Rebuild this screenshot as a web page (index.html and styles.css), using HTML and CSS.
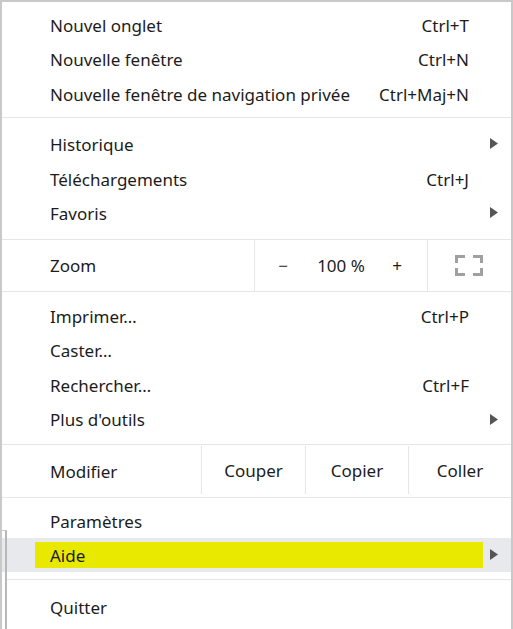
FILE: index.html
```html
<!DOCTYPE html>
<html lang="fr">
<head>
<meta charset="utf-8">
<title>Menu</title>
<link rel="stylesheet" href="styles.css">
</head>
<body>
<div class="menu">
  <div class="group g1 low">
    <div class="item"><span class="label">Nouvel onglet</span><span class="shortcut">Ctrl+T</span><span class="sub"></span></div>
    <div class="item"><span class="label">Nouvelle fenêtre</span><span class="shortcut">Ctrl+N</span><span class="sub"></span></div>
    <div class="item"><span class="label">Nouvelle fenêtre de navigation privée</span><span class="shortcut">Ctrl+Maj+N</span><span class="sub"></span></div>
  </div>
  <div class="sep"></div>
  <div class="group g2 low">
    <div class="item"><span class="label">Historique</span><span class="sub"><svg class="arrow" width="8" height="11" viewBox="0 0 8 11"><polygon points="0,0 8,5.5 0,11"/></svg></span></div>
    <div class="item"><span class="label">Téléchargements</span><span class="shortcut">Ctrl+J</span><span class="sub"></span></div>
    <div class="item"><span class="label">Favoris</span><span class="sub"><svg class="arrow" width="8" height="11" viewBox="0 0 8 11"><polygon points="0,0 8,5.5 0,11"/></svg></span></div>
  </div>
  <div class="sep"></div>
  <div class="zoom-row">
    <div class="zr-label">Zoom</div>
    <div class="zr-ctrl">
      <span class="zbtn zminus">−</span>
      <span class="zval">100 %</span>
      <span class="zbtn zplus">+</span>
    </div>
    <div class="zr-full">
      <svg width="28" height="21" viewBox="0 0 28 21" class="fs-icon">
        <path d="M1.5 8 V1.5 H10"/>
        <path d="M18 1.5 H26.5 V8"/>
        <path d="M1.5 13 V19.5 H10"/>
        <path d="M18 19.5 H26.5 V13"/>
      </svg>
    </div>
  </div>
  <div class="sep"></div>
  <div class="group g4">
    <div class="item"><span class="label">Imprimer…</span><span class="shortcut">Ctrl+P</span><span class="sub"></span></div>
    <div class="item"><span class="label">Caster…</span><span class="sub"></span></div>
    <div class="item"><span class="label">Rechercher…</span><span class="shortcut">Ctrl+F</span><span class="sub"></span></div>
    <div class="item"><span class="label">Plus d'outils</span><span class="sub"><svg class="arrow" width="8" height="11" viewBox="0 0 8 11"><polygon points="0,0 8,5.5 0,11"/></svg></span></div>
  </div>
  <div class="sep"></div>
  <div class="edit-row">
    <div class="er-label">Modifier</div>
    <div class="er-btn">Couper</div>
    <div class="er-btn">Copier</div>
    <div class="er-btn">Coller</div>
  </div>
  <div class="sep"></div>
  <div class="group g5 low">
    <div class="item"><span class="label">Paramètres</span><span class="sub"></span></div>
    <div class="item hover"><span class="label mark">Aide</span><span class="sub narrow"><svg class="arrow" width="8" height="11" viewBox="0 0 8 11"><polygon points="0,0 8,5.5 0,11"/></svg></span></div>
  </div>
  <div class="sep"></div>
  <div class="group g6 low">
    <div class="item"><span class="label">Quitter</span><span class="sub"></span></div>
  </div>
  <div class="edge"></div>
</div>
</body>
</html>
```

FILE: styles.css
```css
html, body {
  margin: 0;
  padding: 0;
  background: #ffffff;
}

body {
  font-family: "Noto Sans", "Open Sans", sans-serif;
  font-size: 17px;
  color: #1c1c1c;
}

.menu {
  position: relative;
  box-sizing: border-box;
  width: 513px;
  height: 629px;
  border-top: 2px solid #c9c9c9;
  border-left: 2px solid #c9c9c9;
  border-right: 2px solid #c9c9c9;
  background: #ffffff;
  overflow: hidden;
}

.group {
  display: flex;
  flex-direction: column;
}

.g1 { padding: 5px 0 6.5px; }
.g2 { padding: 8.5px 0 9px; }
.g4 { padding: 7px 0 7px; }
.g5 { padding: 5px 0 7px; }
.g6 { padding: 9.5px 0 0; }

.item {
  display: flex;
  align-items: center;
  box-sizing: border-box;
  height: 34.5px;
  padding-left: 48px;
  padding-right: 13px;
}

.low .item {
  padding-top: 2px;
}

.item .label {
  flex: 1;
  white-space: nowrap;
}

.item .shortcut {
  white-space: nowrap;
}

.item .sub {
  width: 29px;
  flex-shrink: 0;
  display: flex;
  justify-content: flex-end;
  align-items: center;
}

.low .item .sub {
  margin-top: -2px;
}

.item .sub.narrow {
  width: 15px;
}

.arrow {
  display: block;
  fill: #555555;
}

.item.hover {
  background: #e8e9ec;
}

.item .label.mark {
  flex: none;
  width: 433px;
  height: 26px;
  line-height: 28px;
  margin-left: -15px;
  padding-left: 15px;
  margin-top: -1px;
  background: #e9e900;
}

.sep {
  height: 1px;
  background: #e6e6e6;
}

.zoom-row {
  display: flex;
  height: 51px;
}

.zr-label {
  width: 253px;
  padding-left: 48px;
  box-sizing: border-box;
  display: flex;
  align-items: center;
  border-right: 1px solid #e6e6e6;
}

.zr-ctrl {
  width: 172px;
  display: flex;
  align-items: center;
  border-right: 1px solid #e6e6e6;
}

.zbtn, .zval {
  display: flex;
  justify-content: center;
  align-items: center;
  height: 100%;
}

.zminus { width: 56px; }
.zval { width: 60px; }
.zplus { width: 52px; }

.zr-full {
  flex: 1;
  display: flex;
  justify-content: center;
  align-items: center;
  padding-right: 1px;
}

.fs-icon path {
  fill: none;
  stroke: #a0a0a0;
  stroke-width: 3;
}

.edit-row {
  display: flex;
  height: 52px;
}

.er-label {
  width: 199px;
  padding-left: 48px;
  box-sizing: border-box;
  display: flex;
  align-items: center;
  padding-top: 1px;
}

.er-btn {
  display: flex;
  justify-content: center;
  align-items: center;
  border-left: 1px solid #e6e6e6;
  margin: 1px 0 3px;
}

.er-btn:nth-child(2) { width: 103px; }
.er-btn:nth-child(3) { width: 102px; }
.er-btn:nth-child(4) { flex: 1; }

.edge {
  position: absolute;
  left: -2px;
  top: 528px;
  bottom: 0;
  width: 5px;
  border-top: 1px solid #c9c9c9;
  border-right: 2px solid #b8b8b8;
  background: linear-gradient(to bottom, #ffffff 0 7px, #e8e9ec 7px 41px, #ffffff 41px);
}
```
